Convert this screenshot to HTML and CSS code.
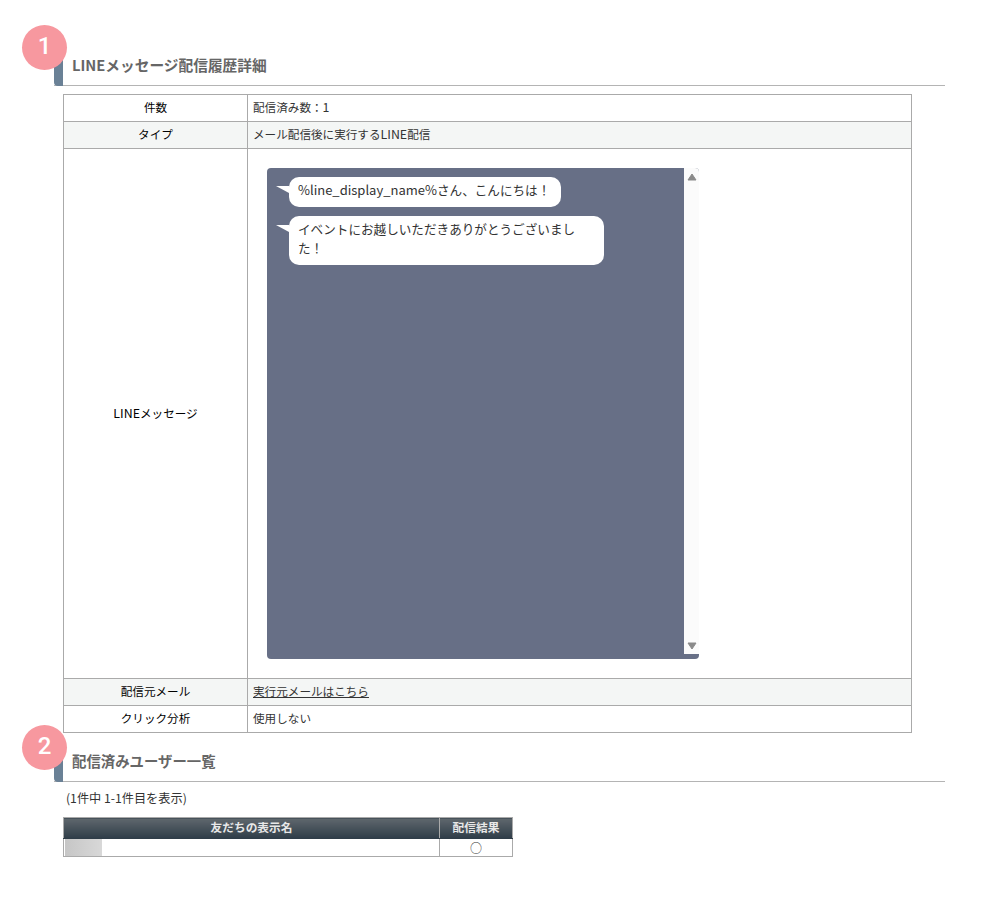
FILE: index.html
```html
<!DOCTYPE html>
<html lang="ja">
<head>
<meta charset="utf-8">
<title>LINEメッセージ配信履歴詳細</title>
<link rel="stylesheet" href="styles.css">
</head>
<body>
<section class="section first">
  <h2 class="heading heading-main"><span class="badge">1</span>LINEメッセージ配信履歴詳細</h2>
  <table class="detail">
    <tr><th>件数</th><td>配信済み数：<span class="latin">1</span></td></tr>
    <tr class="alt"><th>タイプ</th><td>メール配信後に実行する<span class="latin">LINE</span>配信</td></tr>
    <tr class="msg-row"><th><span class="latin">LINE</span>メッセージ</th><td class="msg-cell">
      <div class="chat">
        <div class="chat-body">
          <div class="bubble first-bubble"><span class="bubble-latin">%line_display_name%</span>さん、こんにちは！</div>
          <div class="bubble wide">イベントにお越しいただきありがとうございました！</div>
        </div>
        <div class="scroll">
          <svg class="arrow" width="10" height="8" viewBox="0 0 10 8"><path d="M5 1 L9 7 L1 7 Z" fill="#8a8a8a" stroke="#8a8a8a" stroke-width="1" stroke-linejoin="round"/></svg>
          <svg class="arrow" width="10" height="8" viewBox="0 0 10 8"><path d="M5 7 L9 1 L1 1 Z" fill="#8a8a8a" stroke="#8a8a8a" stroke-width="1" stroke-linejoin="round"/></svg>
        </div>
      </div>
    </td></tr>
    <tr class="alt"><th>配信元メール</th><td><a href="#">実行元メールはこちら</a></td></tr>
    <tr><th>クリック分析</th><td>使用しない</td></tr>
  </table>
</section>
<section class="section second">
  <h2 class="heading heading-sub"><span class="badge">2</span>配信済みユーザー一覧</h2>
  <p class="count">(1件中 1-1件目を表示)</p>
  <table class="users">
    <tr><th class="name-col">友だちの表示名</th><th>配信結果</th></tr>
    <tr><td class="name-cell"><span class="blur"></span></td><td class="result">○</td></tr>
  </table>
</section>
</body>
</html>
```
FILE: styles.css
```css
* { box-sizing: border-box; }
html, body { margin: 0; padding: 0; background: #fff; }
body {
  font-family: "Noto Sans CJK JP", "Liberation Sans", sans-serif;
  font-size: 12px;
  color: #333;
  height: 919px;
  overflow: hidden;
}
.section { padding: 0 45px 0 54px; }
.section.first { padding-top: 50px; }
.section.second { padding-top: 13px; }
.heading {
  position: relative;
  margin: 0;
  height: 36px;
  padding: 4px 0 0 18px;
  border-bottom: 1px solid #b4b4b4;
  line-height: 21px;
  font-weight: 700;
  color: #666;
}
.heading-main { font-size: 14.7px; }
.heading-sub { font-size: 14.4px; }
.heading::before {
  content: "";
  position: absolute;
  left: 0;
  top: 0;
  bottom: -1px;
  width: 9px;
  background: #6a8196;
  border-radius: 0 0 0 4px;
}
.badge {
  position: absolute;
  left: -32px;
  top: -25px;
  width: 45px;
  height: 45px;
  border-radius: 50%;
  background: #f7989f;
  color: #fff;
  font-family: "Roboto", "Liberation Sans", sans-serif;
  font-size: 24px;
  font-weight: 500;
  line-height: 43px;
  text-align: center;
}
.heading-sub .badge { top: -21px; }
table { border-collapse: collapse; }
.detail {
  width: 849px;
  margin: 8px 0 0 9px;
  table-layout: fixed;
}
.detail th, .detail td {
  border: 1px solid #aaa;
  height: 27px;
  padding: 0 5px 2px;
  font-size: 11.6px;
  font-weight: 400;
  line-height: 18px;
  vertical-align: middle;
}
.latin { font-size: 12.4px; }
.detail th { width: 184px; text-align: center; color: #000; }
.alt th, .alt td { background: #f4f6f5; }
.detail a { color: #333; text-decoration: underline; }
.detail .msg-cell { height: 530px; padding: 0 0 0 19px; background: #fff; }
.chat {
  display: flex;
  width: 432px;
  height: 491px;
  background: #676f86;
  border-radius: 4px;
  overflow: hidden;
}
.chat-body {
  flex: 1;
  padding: 9px 0 0 22px;
  display: flex;
  flex-direction: column;
  align-items: flex-start;
  gap: 9px;
}
.bubble {
  position: relative;
  background: #fff;
  border-radius: 10px;
  padding: 4px 10px 8px 9px;
  font-size: 12.6px;
  line-height: 18px;
  color: #333;
}
.bubble-latin { font-size: 13px; }
.first-bubble { width: 272px; white-space: nowrap; }
.bubble.wide { width: 315px; padding-right: 20px; padding-bottom: 8px; padding-top: 3px; line-height: 19px; }
.bubble::before {
  content: "";
  position: absolute;
  left: -13px;
  top: 9px;
  border-right: 13px solid #fff;
  border-top: 7px solid transparent;
  transform: scaleY(-1);
}
.scroll {
  width: 15px;
  height: 486px;
  background: #fbfbfb;
  display: flex;
  flex-direction: column;
  justify-content: space-between;
  align-items: center;
  padding: 5px 0 4px;
}
.arrow { display: block; }
.count { margin: 8px 0 0 12px; font-size: 12.2px; line-height: 17px; color: #333; }
.users {
  width: 450px;
  margin: 10px 0 0 9px;
  table-layout: fixed;
}
.users th {
  height: 21px;
  padding: 0 0 2px;
  border: 1px solid #aaa;
  border-bottom-color: #2f3d48;
  background: linear-gradient(#5f676d, #2f3d48);
  color: #e8e8e8;
  font-size: 11.7px;
  font-weight: 700;
  line-height: 18px;
}
.name-col { width: 376px; }
.users td {
  height: 18px;
  padding: 0;
  border: 1px solid #aaa;
  line-height: 16px;
}
.users .name-cell { padding-left: 1px; vertical-align: top; }
.blur {
  display: block;
  width: 37px;
  height: 17px;
  background: linear-gradient(90deg, #c6c6c6, #d8d8d8);
}
.result { text-align: center; color: #333; }
```
